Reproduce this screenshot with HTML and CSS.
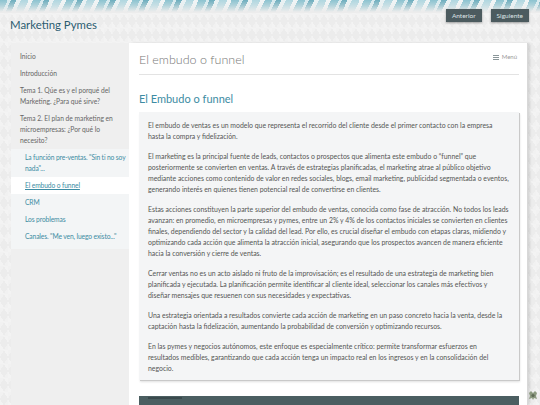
FILE: index.html
```html
<!DOCTYPE html>
<html lang="es">
<head>
<meta charset="utf-8">
<title>Marketing Pymes</title>
<link rel="stylesheet" href="styles.css">
</head>
<body>
<header class="top">
  <div class="brand">Marketing Pymes</div>
  <nav class="pager">
    <a class="btn">Anterior</a>
    <a class="btn">Siguiente</a>
  </nav>
</header>
<div class="layout">
  <aside class="sidebar">
    <ul class="nav">
      <li>Inicio</li>
      <li>Introducción</li>
      <li>Tema 1. Qúe es y el porqué del Marketing. ¿Para qué sirve?</li>
      <li>Tema 2. El plan de marketing en microempresas: ¿Por qué lo necesito?</li>
    </ul>
    <ul class="subnav">
      <li>La función pre-ventas. "Sin ti no soy nada"...</li>
      <li class="active"><span>El embudo o funnel</span></li>
      <li>CRM</li>
      <li>Los problemas</li>
      <li>Canales. "Me ven, luego existo..."</li>
    </ul>
  </aside>
  <main class="card">
    <div class="card-head">
      <h1>El embudo o funnel</h1>
      <div class="menu"><span class="burger"><i></i><i></i><i></i></span>Menú</div>
    </div>
    <h2>El Embudo o funnel</h2>
    <div class="box">
      <p>El embudo de ventas es un modelo que representa el recorrido del cliente desde el primer contacto con la empresa hasta la compra y fidelización.</p>
      <p>El marketing es la principal fuente de leads, contactos o prospectos que alimenta este embudo o “funnel” que posteriormente se convierten en ventas. A través de estrategias planificadas, el marketing atrae al público objetivo mediante acciones como contenido de valor en redes sociales, blogs, email marketing, publicidad segmentada o eventos, generando interés en quienes tienen potencial real de convertirse en clientes.</p>
      <p>Estas acciones constituyen la parte superior del embudo de ventas, conocida como fase de atracción. No todos los leads avanzan: en promedio, en microempresas y pymes, entre un 2% y 4% de los contactos iniciales se convierten en clientes finales, dependiendo del sector y la calidad del lead. Por ello, es crucial diseñar el embudo con etapas claras, midiendo y optimizando cada acción que alimenta la atracción inicial, asegurando que los prospectos avancen de manera eficiente hacia la conversión y cierre de ventas.</p>
      <p>Cerrar ventas no es un acto aislado ni fruto de la improvisación; es el resultado de una estrategia de marketing bien planificada y ejecutada. La planificación permite identificar al cliente ideal, seleccionar los canales más efectivos y diseñar mensajes que resuenen con sus necesidades y expectativas.</p>
      <p>Una estrategia orientada a resultados convierte cada acción de marketing en un paso concreto hacia la venta, desde la captación hasta la fidelización, aumentando la probabilidad de conversión y optimizando recursos.</p>
      <p>En las pymes y negocios autónomos, este enfoque es especialmente crítico: permite transformar esfuerzos en resultados medibles, garantizando que cada acción tenga un impacto real en los ingresos y en la consolidación del negocio.</p>
    </div>
    <div class="footer-bar"><span class="tab"></span></div>
  </main>
</div>
<svg class="corner-icon" width="10" height="9" viewBox="0 0 10 9">
  <path d="M1 2 L3 0 L5 2 L7 0 L9 2 L8 5 L9 8 L6 7 L5 9 L4 7 L1 8 L2 5 Z" fill="#8c9a80"/>
  <circle cx="5" cy="4.5" r="1.6" fill="#5f6b55"/>
</svg>
</body>
</html>
```

FILE: styles.css
```css
* { box-sizing: border-box; }
html, body { margin: 0; padding: 0; }
body {
  width: 540px;
  height: 405px;
  overflow: hidden;
  font-family: Lato, "Liberation Sans", sans-serif;
  background-color: #ececec;
  background-image:
    linear-gradient(60deg, rgba(255,255,255,0.35) 25%, transparent 25%, transparent 75%, rgba(255,255,255,0.35) 75%),
    linear-gradient(-60deg, rgba(255,255,255,0.25) 25%, transparent 25%, transparent 75%, rgba(255,255,255,0.25) 75%);
  background-size: 8px 14px;
  position: relative;
}

.top {
  height: 43px;
  display: flex;
  justify-content: space-between;
  align-items: flex-start;
  padding: 0 11px 0 10px;
  background-image:
    linear-gradient(to bottom, rgba(236,236,236,0) 0px, rgba(236,236,236,0.35) 5px, #ececec 12px),
    repeating-linear-gradient(115deg, #8cc3d0 0 7px, #d6eaef 7px 10px, #6eaebe 10px 15px, #e8f2f4 15px 19px, #b0d7e0 19px 26px, #f0f5f6 26px 30px);
  background-size: 100% 13px, 100% 13px;
  background-repeat: no-repeat;
}
.brand {
  margin-top: 17px;
  font-size: 11.4px;
  line-height: 16px;
  color: #2b5c70;
}
.pager { display: flex; gap: 9px; margin-top: 9px; }
.btn {
  display: block;
  height: 13px;
  line-height: 13px;
  padding: 0 6px;
  font-size: 6.5px;
  color: #dfe5e6;
  background: #4c5b5f;
  box-shadow: 0 1px 2px rgba(0,0,0,0.35);
}

.layout {
  display: flex;
  padding: 0 13px 0 11px;
  height: 362px;
}

.sidebar {
  width: 118px;
  flex: none;
  background: #efefef;
  padding-top: 5px;
  font-size: 6.7px;
  line-height: 11px;
}
.nav, .subnav { list-style: none; margin: 0; padding: 0; }
.nav li {
  padding: 3px 4px 3px 9px;
  color: #666;
}
.subnav { background: #f3f5f6; padding-bottom: 4px; }
.subnav li {
  padding: 3px 1px 3px 14px;
  color: #3d8ca3;
  letter-spacing: -0.12px;
}
.subnav li.active { background: #fff; }
.subnav li.active span { text-decoration: underline; }

.card {
  flex: 1;
  background: #fff;
  padding: 0 8px 0 10px;
  box-shadow: 1px 0 0 #d8d8d8, 3px 0 2px rgba(0,0,0,0.12);
  position: relative;
}
.card-head {
  display: flex;
  justify-content: space-between;
  align-items: flex-start;
  height: 32px;
  border-bottom: 1px solid #e3e3e3;
  padding-top: 9px;
}
.card-head h1 {
  margin: 0;
  font-size: 12.5px;
  line-height: 16px;
  font-weight: 300;
  color: #777;
}
.menu {
  display: flex;
  align-items: center;
  gap: 3px;
  font-size: 6px;
  line-height: 8px;
  color: #9a9a9a;
  margin-top: 1px;
  margin-right: 2px;
}
.burger { display: flex; flex-direction: column; gap: 1px; width: 6px; }
.burger i { display: block; height: 1px; background: #8a9699; }

h2 {
  margin: 17px 0 6px;
  font-size: 11px;
  line-height: 14px;
  font-weight: 400;
  color: #3d8ca3;
}

.box {
  background: #f4f5f6;
  padding: 8px 10px 6px 9px;
  box-shadow: 1px 1px 0 #c9c9c9, 1px 2px 2px rgba(0,0,0,0.12);
  font-size: 6.9px;
  line-height: 11px;
  color: #555;
}
.box p { margin: 0 0 9px; }
.box p:last-child { margin-bottom: 0; }

.footer-bar {
  margin-top: 16px;
  height: 14px;
  background: #4b5e61;
  padding-left: 9px;
  padding-top: 1px;
}
.tab { display: block; width: 34px; height: 2px; background: #3a4a4d; }

.corner-icon {
  position: absolute;
  left: 528px;
  top: 391px;
}
```
